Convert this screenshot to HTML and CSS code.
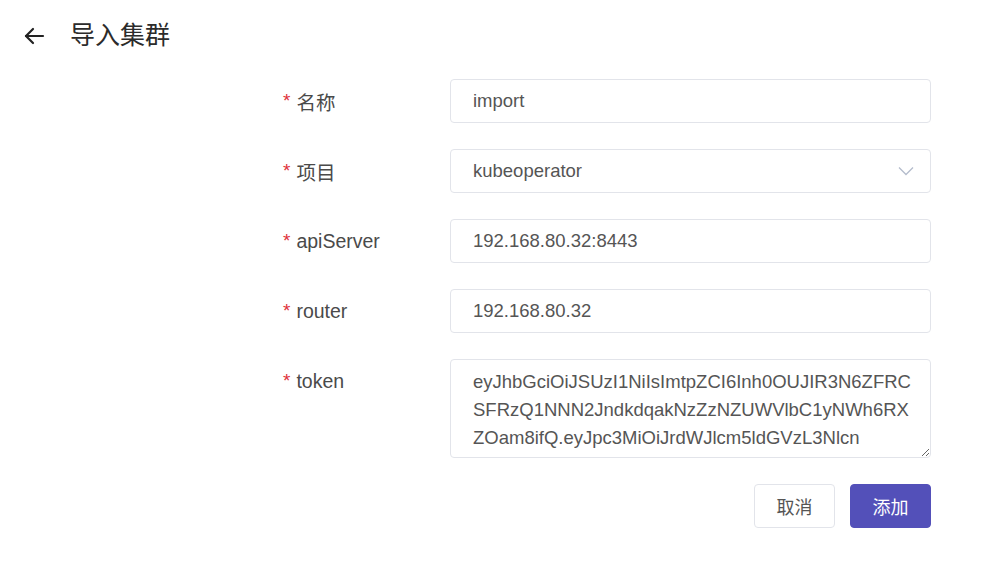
FILE: index.html
```html
<!DOCTYPE html>
<html lang="zh-CN">
<head>
<meta charset="UTF-8" />
<meta name="viewport" content="width=device-width, initial-scale=1" />
<title>导入集群</title>
<link rel="stylesheet" href="styles.css">
</head>
<body>
  <div class="page-header">
    <button class="back-btn" aria-label="返回">
      <svg width="22" height="18" viewBox="0 0 22 18" fill="none" stroke="#222" stroke-width="2.2" stroke-linecap="round" stroke-linejoin="round">
        <path d="M20 9H3"/>
        <path d="M10 2L3 9l7 7"/>
      </svg>
    </button>
    <h2>导入集群</h2>
  </div>

  <form class="import-form">
    <label class="form-label"><span class="req">*</span>名称</label>
    <input class="form-input" type="text" value="import" />

    <label class="form-label"><span class="req">*</span>项目</label>
    <div class="form-select">
      <span>kubeoperator</span>
      <svg width="16" height="10" viewBox="0 0 16 10" fill="none" stroke="#b4bccc" stroke-width="1.3">
        <path d="M1 1.5l7 7 7-7"/>
      </svg>
    </div>

    <label class="form-label"><span class="req">*</span>apiServer</label>
    <input class="form-input" type="text" value="192.168.80.32:8443" />

    <label class="form-label"><span class="req">*</span>router</label>
    <input class="form-input" type="text" value="192.168.80.32" />

    <label class="form-label top"><span class="req">*</span>token</label>
    <textarea class="form-textarea" rows="3">eyJhbGciOiJSUzI1NiIsImtpZCI6Inh0OUJIR3N6ZFRC
SFRzQ1NNN2JndkdqakNzZzNZUWVlbC1yNWh6RX
ZOam8ifQ.eyJpc3MiOiJrdWJlcm5ldGVzL3Nlcn</textarea>

    <div class="form-actions">
      <button type="button" class="btn">取消</button>
      <button type="button" class="btn primary">添加</button>
    </div>
  </form>
</body>
</html>
```

FILE: styles.css
```css
/* Reset & base */
* {
  box-sizing: border-box;
}
body {
  margin: 0;
  background: #fff;
  font-family: 'Liberation Sans', 'Noto Sans CJK SC', sans-serif;
  color: #505050;
}
.page-header {
  display: flex;
  align-items: center;
  height: 72px;
  padding-left: 23px;
}
.back-btn {
  border: none;
  background: none;
  padding: 0;
  width: 22px;
  height: 18px;
  margin-right: 25px;
  cursor: pointer;
}
.page-header h2 {
  margin: 0 0 5px;
  font-size: 25px;
  line-height: 1;
  font-weight: 400;
  color: #2b2b2b;
  font-family: 'Noto Sans CJK SC', sans-serif;
}
/* Form */
.import-form {
  display: grid;
  grid-template-columns: 167px 481px;
  row-gap: 26px;
  margin: 7px 0 0 283px;
}
.form-label {
  display: flex;
  align-items: center;
  height: 44px;
  font-size: 19.5px;
  color: #4a4a4a;
  font-family: 'Liberation Sans', 'Noto Sans CJK SC', sans-serif;
}
.form-label.top {
  align-self: start;
}
.req {
  color: #e0303a;
  margin-right: 6px;
  font-size: 19px;
}
.form-input,
.form-select,
.form-textarea {
  width: 100%;
  border: 1px solid #e2e4ea;
  border-radius: 4px;
  background: #fff;
  color: #555;
  font-family: 'Liberation Sans', 'Noto Sans CJK SC', sans-serif;
  font-size: 18.5px;
  outline: none;
}
.form-input,
.form-select {
  height: 44px;
  padding: 0 22px;
}
.form-select {
  display: flex;
  align-items: center;
  justify-content: space-between;
  padding-right: 16px;
}
.form-textarea {
  height: 99px;
  padding: 8px 22px 6px;
  line-height: 28px;
  resize: vertical;
  white-space: pre;
  overflow: hidden;
}
.form-actions {
  grid-column: 2;
  display: flex;
  justify-content: flex-end;
  gap: 15px;
}
.btn {
  width: 81px;
  height: 44px;
  border: 1px solid #e2e4ea;
  border-radius: 4px;
  background: #fff;
  color: #555;
  font-size: 18px;
  font-family: 'Noto Sans CJK SC', sans-serif;
  cursor: pointer;
}
.btn.primary {
  background: #5350b9;
  border-color: #5350b9;
  color: #fff;
}
```
